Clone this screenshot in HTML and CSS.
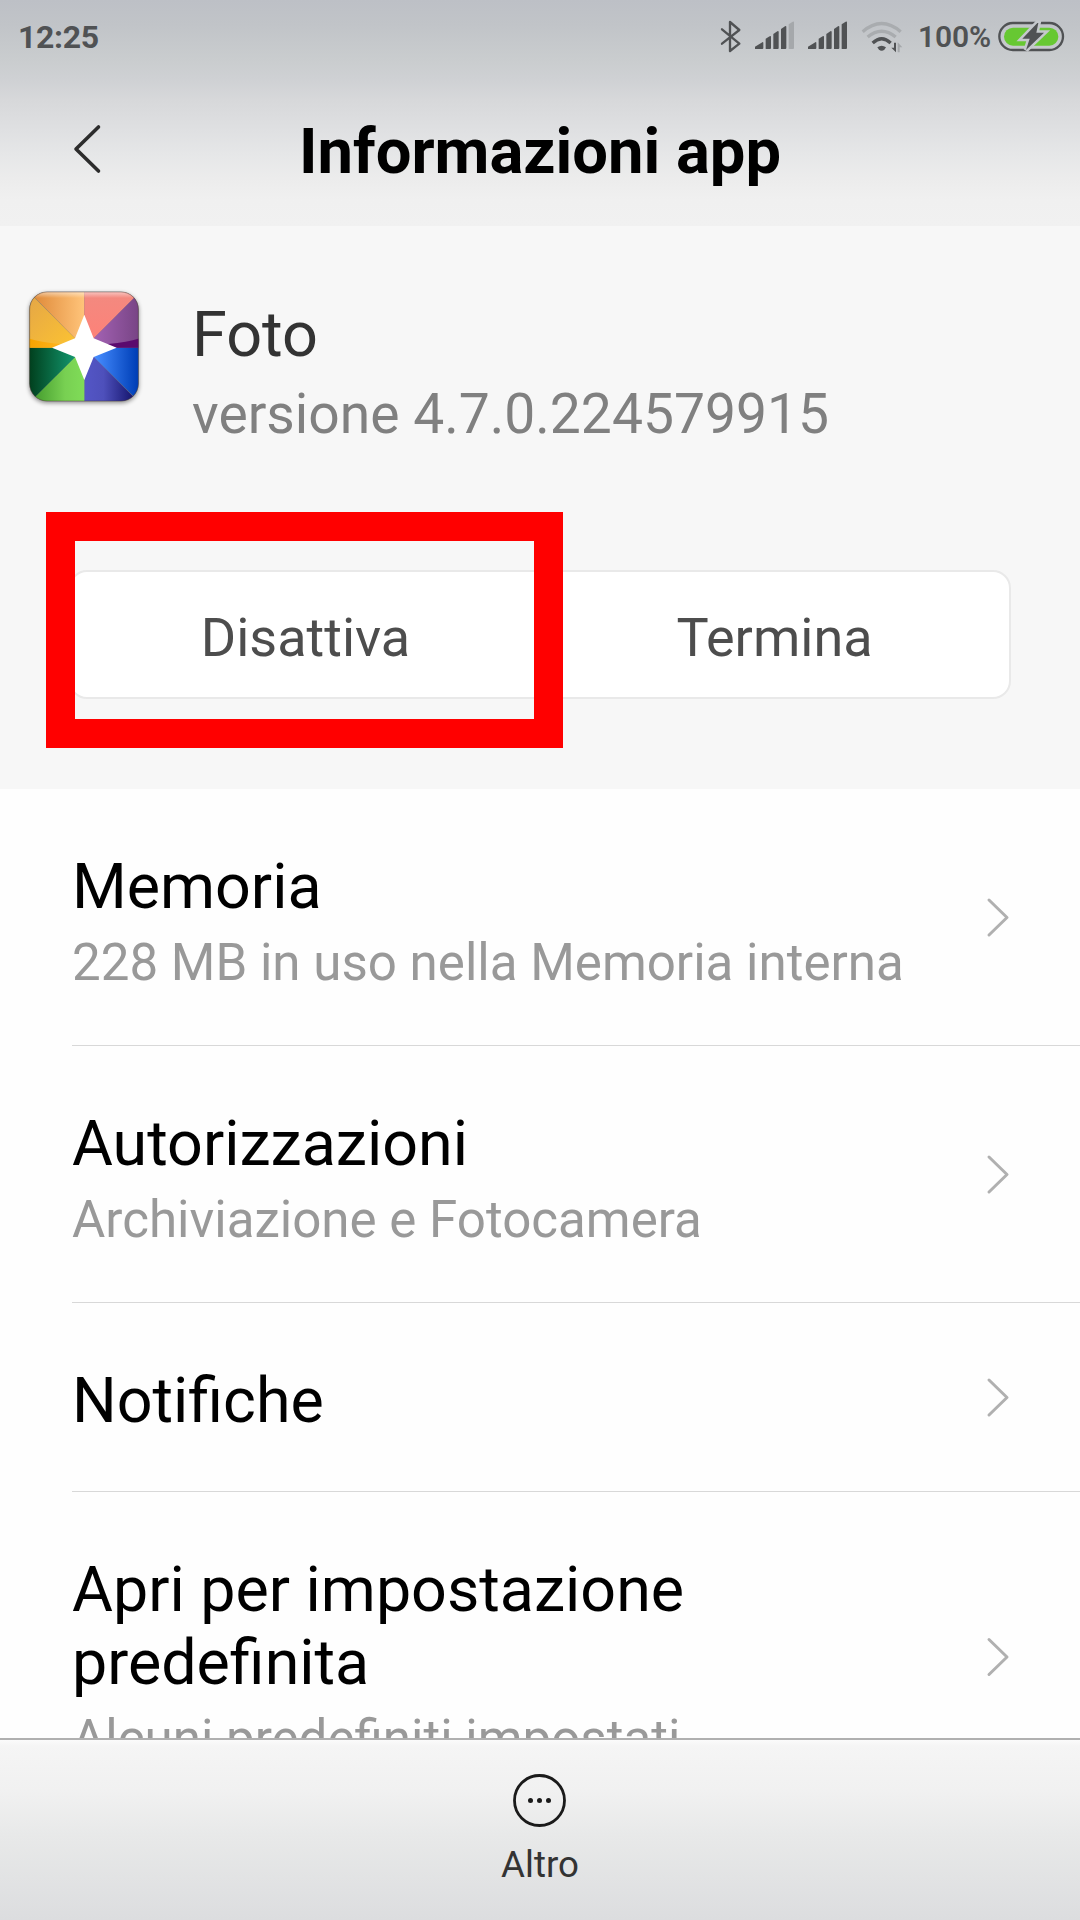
FILE: index.html
```html
<!DOCTYPE html>
<html lang="it">
<head>
<meta charset="utf-8">
<title>Informazioni app</title>
<link rel="stylesheet" href="styles.css">
</head>
<body>
<div class="screen">
  <header class="top">
    <div class="status">
      <span class="clock">12:25</span>
      <div class="indicators">
        <svg class="signals" viewBox="60 0 552 240" width="184" height="80">
          <path class="bluetooth" d="M66 88L118 131L90 153V66L118 90L66 131"/>
          <g class="ink">
            <path d="M165 147V140L187 127Q190 125 190 129V144Q190 147 187 147Z"/>
            <path d="M197 147V116L209 109Q213 107 213 111V144Q213 147 210 147Z"/>
            <path d="M220 147V102L232 94Q236 92 236 96V144Q236 147 233 147Z"/>
            <path d="M243 147V87L255 79Q259 77 259 81V144Q259 147 256 147Z"/>
            <path d="M324 147V140L346 127Q349 125 349 129V144Q349 147 346 147Z"/>
            <path d="M356 147V116L368 109Q372 107 372 111V144Q372 147 369 147Z"/>
            <path d="M379 147V102L391 94Q395 92 395 96V144Q395 147 392 147Z"/>
            <path d="M402 147V87L414 79Q418 77 418 81V144Q418 147 415 147Z"/>
            <path d="M425 147V73L437 65Q441 63 441 67V144Q441 147 438 147Z"/>
            <path d="M532 142Q545 132 558 142L554 148Q545 157 536 148Z"/>
            <path d="M582 128H588V157L574 143H582Z"/>
          </g>
          <g class="faint">
            <path d="M266 147V73L278 65Q282 63 282 67V144Q282 147 279 147Z"/>
            <path d="M593 157V127L607 142H599V157Z"/>
          </g>
          <path class="wave dim" d="M488 95Q545 46 602 95"/>
          <path class="wave dim" d="M503 111Q545 76 587 111"/>
          <path class="wave" d="M518 129Q545 104 572 129"/>
        </svg>
        <span class="percent">100%</span>
        <svg class="battery" viewBox="890 0 204 240" width="68" height="80">
          <rect class="shell" x="897" y="69" width="191" height="81" rx="40.500"/>
          <rect class="charge" x="911" y="83" width="163" height="54" rx="27"/>
          <path class="gap" d="M1011 69L966 116H988L977 150L1031 98H1008L1014 69Z"/>
          <path class="ink" d="M1011 69L966 116H988L977 150L1031 98H1008L1014 69Z"/>
        </svg>
      </div>
    </div>
    <div class="titlebar">
      <svg class="back" viewBox="0 0 30 52" width="30" height="52">
        <path d="M26.500 4L4 26L26.500 48"/>
      </svg>
      <h1>Informazioni app</h1>
    </div>
  </header>

  <section class="summary">
    <div class="app">
      <svg class="app-icon" viewBox="0 0 450 450" width="150" height="150">
        <defs>
          <clipPath id="tile"><rect x="59" y="66" width="326" height="327" rx="52"/></clipPath>
          <linearGradient id="orange"><stop offset="0" stop-color="#dc8433"/><stop offset="1" stop-color="#ffc47a"/></linearGradient>
          <linearGradient id="yellow" x1="0" y1="0" x2="1" y2="1"><stop offset="0" stop-color="#e3a548"/><stop offset="1" stop-color="#ffc62f"/></linearGradient>
          <linearGradient id="coral" x1="0" y1="0" x2="0" y2="1"><stop offset="0" stop-color="#f28a80"/><stop offset="1" stop-color="#ff8077"/></linearGradient>
          <linearGradient id="purple"><stop offset="0" stop-color="#ac68bd"/><stop offset="1" stop-color="#764383"/></linearGradient>
          <linearGradient id="blue"><stop offset="0" stop-color="#4a90ff"/><stop offset=".2" stop-color="#468cff"/><stop offset=".95" stop-color="#0040b8"/></linearGradient>
          <linearGradient id="indigo"><stop offset="0" stop-color="#5456c6"/><stop offset=".35" stop-color="#4e50bb"/><stop offset=".9" stop-color="#14146d"/></linearGradient>
          <linearGradient id="lime"><stop offset="0" stop-color="#3d9428"/><stop offset=".65" stop-color="#78d052"/><stop offset="1" stop-color="#80dc58"/></linearGradient>
          <linearGradient id="green"><stop offset="0" stop-color="#003e1c"/><stop offset=".8" stop-color="#12946b"/></linearGradient>
          <linearGradient id="shade"><stop offset="0" stop-color="#f5a300"/><stop offset="1" stop-color="#ffb41c"/></linearGradient>
          <linearGradient id="rim" x1="0" y1="0" x2="0" y2="1"><stop offset="0" stop-color="#fff" stop-opacity=".55"/><stop offset=".06" stop-color="#fff" stop-opacity="0"/></linearGradient>
        </defs>
        <rect class="app-shadow" x="58" y="65" width="328" height="329" rx="53"/>
        <g clip-path="url(#tile)">
          <path fill="url(#orange)" d="M56 64H223V233Z"/>
          <path fill="url(#yellow)" d="M56 66L223 233H56Z"/>
          <path fill="url(#coral)" d="M223 64H392L223 233Z"/>
          <path fill="url(#purple)" d="M392 64V233H223Z"/>
          <path fill="url(#blue)" d="M223 233H388V396Z"/>
          <path fill="url(#indigo)" d="M223 233L388 398H223Z"/>
          <path fill="url(#lime)" d="M223 233V398H58Z"/>
          <path fill="url(#green)" d="M56 233H223L56 400Z"/>
          <path fill="url(#shade)" d="M56 205Q90 216 150 222V233H56Z"/>
          <path fill="#5b0a6e" d="M388 205Q354 216 294 222V233H388Z"/>
          <rect x="56" y="64" width="334" height="334" fill="url(#rim)"/>
        </g>
        <rect class="app-edge" x="59" y="66" width="326" height="327" rx="52"/>
        <path fill="#fff" d="M223 134L251 205L320 233L251 261L223 330L195 261L126 233L195 205Z"/>
      </svg>
      <div class="app-text">
        <div class="app-name">Foto</div>
        <div class="app-version">versione 4.7.0.224579915</div>
      </div>
    </div>
    <div class="actions">
      <div class="action">Disattiva</div>
      <div class="action">Termina</div>
      <div class="highlight"></div>
    </div>
  </section>

  <main class="list">
    <div class="row">
      <div class="row-text">
        <div class="row-title">Memoria</div>
        <div class="row-sub">228 MB in uso nella Memoria interna</div>
      </div>
      <svg class="chevron" viewBox="0 0 24 42" width="24" height="42"><path d="M3 4L21 21.500L3 39"/></svg>
    </div>
    <div class="row">
      <div class="row-text">
        <div class="row-title">Autorizzazioni</div>
        <div class="row-sub">Archiviazione e Fotocamera</div>
      </div>
      <svg class="chevron" viewBox="0 0 24 42" width="24" height="42"><path d="M3 4L21 21.500L3 39"/></svg>
    </div>
    <div class="row">
      <div class="row-text">
        <div class="row-title">Notifiche</div>
      </div>
      <svg class="chevron" viewBox="0 0 24 42" width="24" height="42"><path d="M3 4L21 21.500L3 39"/></svg>
    </div>
    <div class="row">
      <div class="row-text">
        <div class="row-title">Apri per impostazione<br>predefinita</div>
        <div class="row-sub">Alcuni predefiniti impostati</div>
      </div>
      <svg class="chevron" viewBox="0 0 24 42" width="24" height="42"><path d="M3 3.500L21 21L3 38.500"/></svg>
    </div>
  </main>

  <footer class="toolbar">
    <svg class="more" viewBox="0 0 54 54" width="54" height="54">
      <circle class="ring" cx="26.500" cy="26.500" r="25"/>
      <circle cx="17.500" cy="26.500" r="2.500"/><circle cx="26.500" cy="26.500" r="2.500"/><circle cx="35.500" cy="26.500" r="2.500"/>
    </svg>
    <span>Altro</span>
  </footer>
</div>
</body>
</html>
```
FILE: styles.css
```css
* { box-sizing: border-box; }
body { margin: 0; font-family: Roboto, sans-serif; background: #fff; }
svg { display: block; flex: none; }
.screen { width: 1080px; height: 1920px; display: flex; flex-direction: column; overflow: hidden; }

.top {
  flex: none;
  height: 226px;
  background: linear-gradient(#bdc0c6 0, #c1c4c8 25px, #cacdcf 62px, #cfd1d4 80px, #d7d8da 100px, #dfe0e2 130px, #e6e7e8 155px, #ececec 178px, #f0f0f0 200px, #f1f1f1 226px);
}
.status { height: 80px; display: flex; justify-content: space-between; padding: 0 15px 0 18px; color: #505254; }
.clock { font-size: 32px; font-weight: 700; line-height: 74px; letter-spacing: -.35px; }
.indicators { display: flex; }
.percent { width: 75px; margin-left: 14px; margin-right: 4px; font-size: 30px; font-weight: 600; line-height: 73px; letter-spacing: -.1px; white-space: nowrap; }
.ink { fill: #505254; }
.faint { fill: #a5a8ab; }
.bluetooth { fill: none; stroke: #505254; stroke-width: 7; stroke-linejoin: round; stroke-linecap: round; }
.wave { fill: none; stroke: #505254; stroke-width: 10; }
.wave.dim { stroke: #a9acaf; }
.shell { fill: none; stroke: #505254; stroke-width: 7; }
.charge { fill: #67c832; }
.gap { fill: #c5c8cc; stroke: #c5c8cc; stroke-width: 15; }

.titlebar { height: 146px; display: flex; align-items: flex-start; padding: 43px 72px 0 72px; }
.back { fill: none; stroke: #2c2c2c; stroke-width: 3.6; stroke-linecap: round; stroke-linejoin: round; }
h1 { flex: 1; margin: -8px 30px 0 0; font-size: 63.3px; line-height: 73px; font-weight: 700; text-align: center; color: #000; }

.summary { flex: none; height: 563px; background: #f7f7f7; }
.app { display: flex; height: 344px; padding: 44px 0 0 10px; }
.app-shadow { fill: #777; filter: drop-shadow(0 5px 6px rgba(0, 0, 0, .45)); }
.app-edge { fill: none; stroke: rgba(70, 50, 40, .35); stroke-width: 3; }
.app-text { padding: 28px 0 0 32px; }
.app-name { font-size: 63px; line-height: 73px; color: #333; }
.app-version { margin-top: 11px; font-size: 55.2px; line-height: 64px; color: #808080; }
.actions { position: relative; display: flex; width: 942px; height: 129px; margin: 0 auto; border: 2px solid #e9e9e9; border-radius: 18px; background: #fff; }
.action { flex: 1; font-size: 54px; line-height: 131px; text-align: center; color: #4d4d4d; }
.highlight { position: absolute; left: -25px; top: -60px; width: 517px; height: 236px; border: 29px solid #f00; }

.list { height: 949px; overflow: hidden; background: #fefefe; }
.row { display: flex; align-items: center; justify-content: space-between; min-height: 189px; margin-left: 72px; padding-right: 70px; border-bottom: 1px solid #d8d8d8; }
.row-text { align-self: stretch; padding: 61px 0 52px; }
.row-title { font-size: 62.75px; line-height: 73px; color: #000; }
.row-sub { margin-top: 9px; font-size: 51.1px; line-height: 61px; color: #999; white-space: nowrap; }
.chevron { fill: none; stroke: #b0b0b0; stroke-width: 3; stroke-linecap: round; stroke-linejoin: round; }

.toolbar { flex: none; height: 182px; display: flex; flex-direction: column; align-items: center; padding-top: 34px; border-top: 2px solid #b0b0b0; background: linear-gradient(#fbfbfb, #f5f5f5 6px, #f1f1f1 50px, #e8e9e9 95px, #dcdddf 180px); font-size: 36.7px; line-height: 42px; color: #333; }
.toolbar span { margin-top: 16px; }
.ring { fill: none; stroke: #1a1a1a; stroke-width: 2.8; }
.more { fill: #1a1a1a; }
```
